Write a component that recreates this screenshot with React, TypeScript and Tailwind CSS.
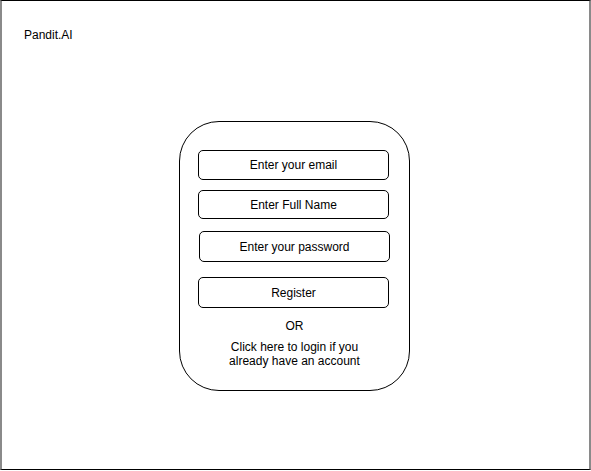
import React from "react";

const font = { fontFamily: '"Liberation Sans", Arial, sans-serif' };

function Field({ label, className }: { label: string; className: string }) {
  return (
    <div
      className={`flex items-center justify-center border border-black rounded-[5px] text-[12px] text-black bg-white ${className}`}
    >
      {label}
    </div>
  );
}

export default function App() {
  return (
    <div
      className="w-[591px] h-[471px] bg-white relative overflow-hidden"
      style={font}
    >
      <div className="w-[591px] h-[470px] border-t border-b border-t-black border-b-black border-l-2 border-r-2 border-l-[#8a8a8a] border-r-[#8a8a8a] box-border flex flex-col">
        <div className="pl-[22px] pt-[27px] text-[12px] leading-[14px] text-black">Pandit.AI</div>
        <div className="ml-[177px] mt-[79px] w-[231px] h-[270px] border border-black rounded-[40px] flex flex-col">
          <Field label="Enter your email" className="ml-[18px] mt-[28px] w-[191px] h-[30px]" />
          <Field label="Enter Full Name" className="ml-[18px] mt-[10px] w-[191px] h-[29px]" />
          <Field label="Enter your password" className="ml-[19px] mt-[12px] w-[191px] h-[31px]" />
          <Field label="Register" className="ml-[18px] mt-[15px] w-[191px] h-[31px]" />
          <div className="mt-[11px] text-center text-[12px] leading-[14px] text-black">OR</div>
          <div className="mt-[7px] text-center text-[12px] leading-[14px] text-black">
            Click here to login if you
            <br />
            already have an account
          </div>
        </div>
      </div>
    </div>
  );
}
